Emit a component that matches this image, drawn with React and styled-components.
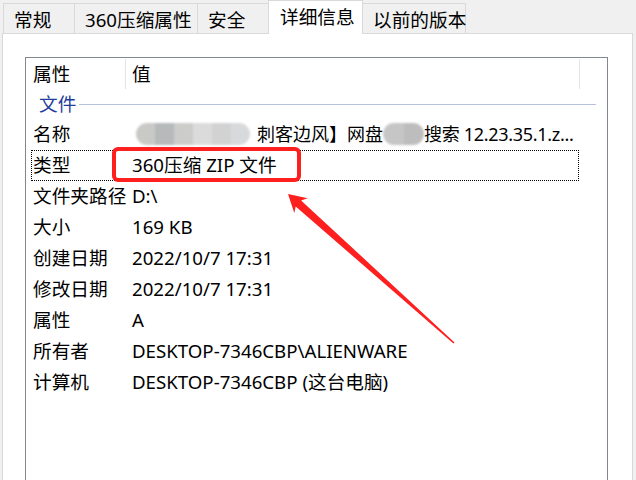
import React from 'react'
import styled, { createGlobalStyle } from 'styled-components'

const GlobalStyle = createGlobalStyle`
  html, body {
    margin: 0;
    padding: 0;
    background: #f0f0f0;
  }
  body {
    font-family: "Noto Sans", "Noto Sans CJK SC", sans-serif;
    color: #000;
  }
`;

const Page = styled.div`
  position: relative;
  width: 636px;
  height: 480px;
  overflow: hidden;
  background: #f0f0f0;
  font-size: 18.67px;
  line-height: 1.3;
`;

const TabStrip = styled.div`
  display: flex;
  align-items: flex-end;
  height: 33px;
  padding-left: 3px;
`;

const Tab = styled.div`
  position: relative;
  box-sizing: border-box;
  width: ${p => p.$w}px;
  height: ${p => (p.$active ? 34 : 30)}px;
  margin-left: -1px;
  margin-bottom: ${p => (p.$active ? -1 : 0)}px;
  padding: ${p => (p.$active ? '0 0 1px 11px' : '3px 0 0 10px')};
  display: flex;
  align-items: center;
  border: 1px solid #d9d9d9;
  border-bottom: none;
  background: ${p => (p.$active ? '#fff' : '#f0f0f0')};
  z-index: ${p => (p.$active ? 2 : 1)};
  white-space: nowrap;
  &:first-child {
    margin-left: 0;
  }
`;

const Panel = styled.div`
  box-sizing: border-box;
  margin-left: 2px;
  width: 631px;
  height: 460px;
  background: #fff;
  border: 1px solid #d9d9d9;
  padding: 23px 0 0 22px;
`;

const ListView = styled.div`
  box-sizing: border-box;
  width: 583px;
  height: 430px;
  border: 1px solid #828790;
  background: #fff;
`;

const Header = styled.div`
  display: flex;
  height: 32px;
  align-items: center;
`;

const HeaderCell = styled.div`
  box-sizing: border-box;
  width: ${p => p.$w}px;
  height: 30px;
  padding-left: ${p => p.$pad}px;
  display: flex;
  align-items: center;
  border-right: 1px solid #e5e5e5;
`;

const Group = styled.div`
  display: flex;
  align-items: center;
  height: 29px;
  padding: 0 11px 0 13px;
  color: #1e3c9b;
`;

const GroupLine = styled.div`
  flex: 1;
  height: 1px;
  margin-left: 3px;
  background: #b6c2dd;
`;

const Row = styled.div`
  box-sizing: border-box;
  display: flex;
  align-items: center;
  width: 548px;
  height: 31px;
  margin-left: 5px;
  border: 1px ${p => (p.$focus ? 'dotted #000' : 'solid transparent')};
  white-space: nowrap;
`;

const Label = styled.div`
  box-sizing: border-box;
  width: 100px;
  padding-left: 1px;
  flex-shrink: 0;
`;

const Value = styled.div`
  display: flex;
  align-items: center;
`;

const NameValue = styled(Value)`
  font-size: 18px;
`;

const Tail = styled.span`
  letter-spacing: -0.3px;
`;

const Blur = styled.div`
  display: flex;
  height: 22px;
  width: ${p => p.$w}px;
  margin: 0 ${p => p.$mr}px 0 ${p => p.$ml}px;
  border-radius: 11px;
  overflow: hidden;
  filter: blur(0.8px);
`;

const BlurCell = styled.div`
  flex: 1;
  background: ${p => p.$c};
`;

const Highlight = styled.div`
  position: absolute;
  left: 112px;
  top: 147px;
  width: 189px;
  height: 35px;
  box-sizing: border-box;
  border: 4px solid #fe1f1f;
  border-radius: 6px;
`;

const ArrowLayer = styled.svg`
  position: absolute;
  left: 0;
  top: 0;
  pointer-events: none;
`;

const tabs = [
  { label: '常规', w: 72 },
  { label: '360压缩属性', w: 124 },
  { label: '安全', w: 72 },
  { label: '详细信息', w: 95, active: true },
  { label: '以前的版本', w: 104 },
];

const rows = [
  { label: '类型', value: '360压缩 ZIP 文件', focus: true },
  { label: '文件夹路径', value: 'D:\\' },
  { label: '大小', value: '169 KB' },
  { label: '创建日期', value: '2022/10/7 17:31' },
  { label: '修改日期', value: '2022/10/7 17:31' },
  { label: '属性', value: 'A' },
  { label: '所有者', value: 'DESKTOP-7346CBP\\ALIENWARE' },
  { label: '计算机', value: 'DESKTOP-7346CBP (这台电脑)' },
];

const blurA = ['#c9c9c7', '#b6baba', '#cccccb', '#dbdbdb', '#d2d2d3', '#d8d9db'];
const blurB = ['#c6c6c6', '#bdbdbd'];

function App() {
  return (
    <Page>
      <GlobalStyle />
      <TabStrip>
        {tabs.map(t => (
          <Tab key={t.label} $w={t.w} $active={t.active}>{t.label}</Tab>
        ))}
      </TabStrip>
      <Panel>
        <ListView>
          <Header>
            <HeaderCell $w={100} $pad={7}>属性</HeaderCell>
            <HeaderCell $w={454} $pad={6}>值</HeaderCell>
          </Header>
          <Group>
            文件
            <GroupLine />
          </Group>
          <Row>
            <Label>名称</Label>
            <NameValue>
              <Blur $w={114} $ml={4} $mr={7}>
                {blurA.map((c, i) => <BlurCell key={i} $c={c} />)}
              </Blur>
              刺客边风】网盘
              <Blur $w={41} $ml={0} $mr={0}>
                {blurB.map((c, i) => <BlurCell key={i} $c={c} />)}
              </Blur>
              <Tail>搜索 12.23.35.1.z...</Tail>
            </NameValue>
          </Row>
          {rows.map(r => (
            <Row key={r.label + r.value} $focus={r.focus}>
              <Label>{r.label}</Label>
              <Value>{r.value}</Value>
            </Row>
          ))}
        </ListView>
      </Panel>
      <Highlight />
      <ArrowLayer width="636" height="480" viewBox="0 0 636 480">
        <polygon
          points="288,194 294.3,213.1 295.7,206.4 453.4,343.6 454.5,342.4 301.1,200.4 307.7,198.3"
          fill="#fe1f1f"
        />
      </ArrowLayer>
    </Page>
  )
}

export default App
